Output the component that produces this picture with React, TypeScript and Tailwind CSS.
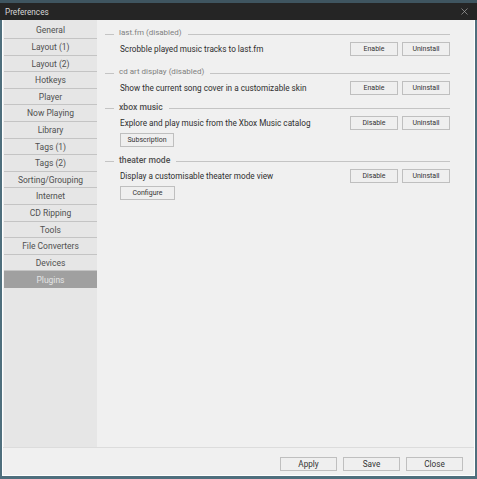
import { X } from 'lucide-react';

const tabs = ['General', 'Layout (1)', 'Layout (2)', 'Hotkeys', 'Player', 'Now Playing', 'Library', 'Tags (1)', 'Tags (2)', 'Sorting/Grouping', 'Internet', 'CD Ripping', 'Tools', 'File Converters', 'Devices', 'Plugins'];

function Btn({ label, w, size = 'text-[7px]' }: { label: string; w: string; size?: string }) {
  return (
    <div className={`${w} h-[14px] ${size} shrink-0 flex items-center justify-center bg-[#efefef] border border-[#bfbfbf] text-[#333333] pt-px`}>
      {label}
    </div>
  );
}

function Header({ title, dim }: { title: string; dim?: boolean }) {
  return (
    <div className="flex items-center h-[12px] gap-[5px]">
      <div className="w-[9px] h-px bg-[#c4c4c4] mt-[4px]" />
      <span className={`leading-[12px] pt-px ${dim ? 'text-[8px] text-[#808080]' : 'text-[8.6px] text-[#505050] font-medium'}`}>{title}</span>
      <div className="flex-1 h-px bg-[#c4c4c4] mt-[4px] ml-px" />
    </div>
  );
}

function Plugin({ title, text, action, dim, extra, extraW }: { title: string; text: string; action: string; dim?: boolean; extra?: string; extraW?: string }) {
  return (
    <div>
      <Header title={title} dim={dim} />
      <div className="flex items-center justify-between pl-[15px] mt-[4px] h-[14px]">
        <span className="text-[8.2px] text-[#2e2e2e] whitespace-nowrap pt-px">{text}</span>
        <div className="flex gap-[4px]">
          <Btn label={action} w="w-[48px]" />
          <Btn label="Uninstall" w="w-[48px]" />
        </div>
      </div>
      {extra && extraW && (
        <div className="pl-[15px] mt-[3px]">
          <Btn label={extra} w={extraW} />
        </div>
      )}
    </div>
  );
}

export default function App() {
  return (
    <div className="w-[477px] h-[479px] bg-[#4f6f7d] pl-[2px] pr-[2px] pb-[3px] flex flex-col font-['Roboto','Noto_Sans',sans-serif] overflow-hidden">
      <div className="h-[20px] shrink-0 -mx-[2px] pl-[5px] pr-[7px] bg-[#252525] border-t-[3px] border-[#3f5560] flex items-center justify-between text-[#d8d8d8] text-[8.2px]">
        <span className="pt-px">Preferences</span>
        <X className="w-[11px] h-[11px] text-[#a8a8a8]" strokeWidth={1.5} />
      </div>
      <div className="flex-1 flex flex-col bg-[#f0f0f0] border-x border-b border-white min-h-0">
        <div className="flex-1 flex min-h-0 border-b border-[#dcdcdc]">
          <div className="w-[93px] ml-px bg-[#e6e6e6] flex flex-col pt-[2.5px] shrink-0">
            {tabs.map((t) => (
              <div
                key={t}
                className={`h-[16.6px] shrink-0 flex items-center justify-center text-[8.5px] pt-px ${
                  t === 'Plugins' ? 'bg-[#a0a0a0] text-[#e4e4e4]' : 'text-[#505050] border-b border-[#c4c4c4]'
                }`}
              >
                {t}
              </div>
            ))}
          </div>
          <div className="flex-1 pl-[8px] pr-[24px] pt-[6px] flex flex-col">
            <Plugin title="last.fm (disabled)" text="Scrobble played music tracks to last.fm" action="Enable" dim />
            <div className="h-[9px] shrink-0" />
            <Plugin title="cd art display (disabled)" text="Show the current song cover in a customizable skin" action="Enable" dim />
            <div className="h-[5px] shrink-0" />
            <Plugin title="xbox music" text="Explore and play music from the Xbox Music catalog" action="Disable" extra="Subscription" extraW="w-[54px]" />
            <div className="h-[6px] shrink-0" />
            <Plugin title="theater mode" text="Display a customisable theater mode view" action="Disable" extra="Configure" extraW="w-[55px]" />
          </div>
        </div>
        <div className="h-[27px] shrink-0 flex items-start justify-end gap-[6px] pr-[11px] pt-[9px]">
          <Btn label="Apply" w="w-[57px]" size="text-[8.2px]" />
          <Btn label="Save" w="w-[57px]" size="text-[8.2px]" />
          <Btn label="Close" w="w-[57px]" size="text-[8.2px]" />
        </div>
      </div>
    </div>
  );
}
